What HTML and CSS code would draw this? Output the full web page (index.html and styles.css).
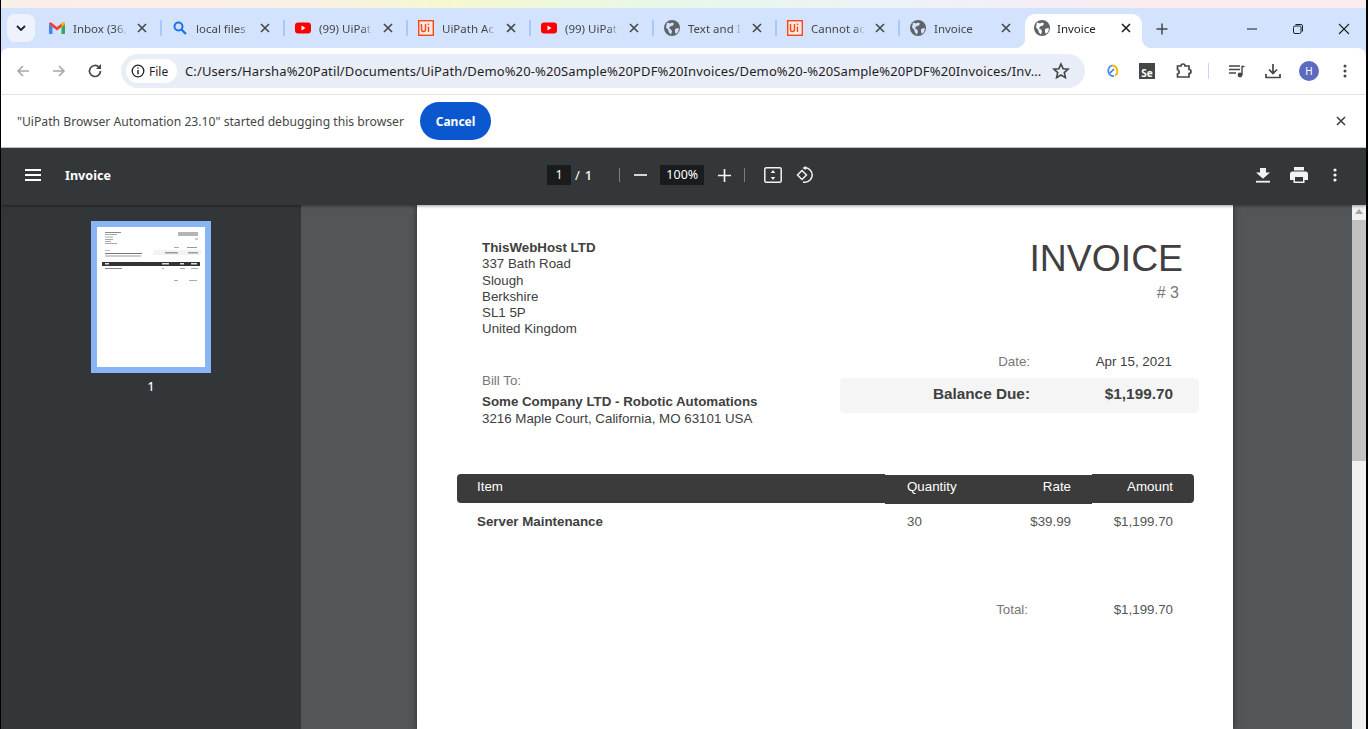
FILE: index.html
```html
<!DOCTYPE html>
<html lang="en">
<head>
    <meta charset="UTF-8">
    <title>Invoice</title>
    <link rel="stylesheet" href="styles.css">
</head>
<body>
    <svg class="defs" width="0" height="0">
        <symbol id="ic-close" viewBox="0 0 12 12"><path d="M2 2l8 8M10 2l-8 8" fill="none" stroke="currentColor" stroke-width="1.6"/></symbol>
        <symbol id="ic-globe" viewBox="0 0 16 16"><circle cx="8" cy="8" r="8" fill="#5f6368"/><path d="M3 2.500l3 1 2-1 2 1-1 2-3 1-1 2 2 1 1 2-1 3-2-2-1-3-2-2zM11 9l3-1 1 1-1 3-2 2-1-2z" fill="#d3e3fd"/></symbol>
        <symbol id="ic-globe-w" viewBox="0 0 16 16"><circle cx="8" cy="8" r="8" fill="#5f6368"/><path d="M3 2.500l3 1 2-1 2 1-1 2-3 1-1 2 2 1 1 2-1 3-2-2-1-3-2-2zM11 9l3-1 1 1-1 3-2 2-1-2z" fill="#fff"/></symbol>
        <symbol id="ic-yt" viewBox="0 0 16 12"><rect width="16" height="11" y=".5" rx="3" fill="#f00"/><path d="M6.500 3.500v5l4-2.500z" fill="#fff"/></symbol>
        <symbol id="ic-ui" viewBox="0 0 16 16"><rect x=".7" y=".7" width="14.600" height="14.600" fill="#fbe9e3" stroke="#fa4616" stroke-width="1.400"/><path d="M3.500 4v5.500a2 2 0 004 0V4M10.500 6.500V12M10.500 3.500v1.500" fill="none" stroke="#fa4616" stroke-width="1.400"/></symbol>
        <symbol id="ic-gmail" viewBox="0 0 16 12"><path d="M0 2v9a1 1 0 001 1h2.500V5z" fill="#4285f4"/><path d="M16 2v9a1 1 0 01-1 1h-2.500V5z" fill="#34a853"/><path d="M0 2l3.500 3L8 8.500 12.500 5 16 2a1.500 1.500 0 00-2.500-1.200L8 5 2.500.8A1.500 1.500 0 000 2z" fill="#ea4335"/><path d="M12.500 5V1.800l1-1A1.500 1.500 0 0116 2z" fill="#fbbc04"/></symbol>
    </svg>

    <div class="aurora"></div>

    <div class="tabstrip">
        <button class="tab-search"><svg width="10" height="6" viewBox="0 0 10 6"><path d="M1 1l4 4 4-4" fill="none" stroke="#1f1f1f" stroke-width="1.800"/></svg></button>
        <div class="tab">
            <svg class="favicon gmail"><use href="#ic-gmail"/></svg>
            <span class="tab-title">Inbox (36,</span>
            <svg class="tab-x"><use href="#ic-close"/></svg>
        </div>
        <div class="tab">
            <svg class="favicon" viewBox="0 0 16 16"><circle cx="6.500" cy="6.500" r="4" fill="none" stroke="#1a73e8" stroke-width="2"/><path d="M9.500 9.500l4.500 4.500" stroke="#1a73e8" stroke-width="2.200"/></svg>
            <span class="tab-title">local files</span>
            <svg class="tab-x"><use href="#ic-close"/></svg>
        </div>
        <div class="tab">
            <svg class="favicon yt"><use href="#ic-yt"/></svg>
            <span class="tab-title">(99) UiPat</span>
            <svg class="tab-x"><use href="#ic-close"/></svg>
        </div>
        <div class="tab">
            <svg class="favicon"><use href="#ic-ui"/></svg>
            <span class="tab-title">UiPath Ac</span>
            <svg class="tab-x"><use href="#ic-close"/></svg>
        </div>
        <div class="tab">
            <svg class="favicon yt"><use href="#ic-yt"/></svg>
            <span class="tab-title">(99) UiPat</span>
            <svg class="tab-x"><use href="#ic-close"/></svg>
        </div>
        <div class="tab">
            <svg class="favicon"><use href="#ic-globe"/></svg>
            <span class="tab-title">Text and I</span>
            <svg class="tab-x"><use href="#ic-close"/></svg>
        </div>
        <div class="tab">
            <svg class="favicon"><use href="#ic-ui"/></svg>
            <span class="tab-title">Cannot ac</span>
            <svg class="tab-x"><use href="#ic-close"/></svg>
        </div>
        <div class="tab tab-last">
            <svg class="favicon"><use href="#ic-globe"/></svg>
            <span class="tab-title">Invoice</span>
            <svg class="tab-x"><use href="#ic-close"/></svg>
        </div>
        <div class="tab tab-active">
            <svg class="favicon"><use href="#ic-globe-w"/></svg>
            <span class="tab-title">Invoice</span>
            <svg class="tab-x"><use href="#ic-close"/></svg>
        </div>
        <svg class="new-tab" width="12" height="12" viewBox="0 0 12 12"><path d="M6 .5v11M.5 6h11" stroke="#444746" stroke-width="1.500"/></svg>
        <div class="window-btns">
            <svg width="12" height="12" viewBox="0 0 12 12"><path d="M1 6h10" stroke="#1f1f1f"/></svg>
            <svg width="12" height="12" viewBox="0 0 12 12"><rect x="1.500" y="3" width="7.500" height="7.500" rx="1.500" fill="none" stroke="#1f1f1f"/><path d="M3.500 1.500h5.500a1.500 1.500 0 011.500 1.500v5.500" fill="none" stroke="#1f1f1f"/></svg>
            <svg width="12" height="12" viewBox="0 0 12 12"><path d="M1 1l10 10M11 1L1 11" stroke="#1f1f1f" stroke-width="1.100"/></svg>
        </div>
    </div>

    <div class="toolbar">
        <svg class="nav-ic" viewBox="0 0 16 16"><path d="M14 8H3M8 3L3 8l5 5" fill="none" stroke="#a5a7aa" stroke-width="1.600"/></svg>
        <svg class="nav-ic" viewBox="0 0 16 16"><path d="M2 8h11M8 3l5 5-5 5" fill="none" stroke="#a5a7aa" stroke-width="1.600"/></svg>
        <svg class="nav-ic" viewBox="0 0 16 16"><path d="M13.500 8A5.500 5.500 0 1112 4.200" fill="none" stroke="#444746" stroke-width="1.700"/><path d="M14 1v5H9z" fill="#444746"/></svg>
        <div class="omnibox">
            <div class="chip">
                <svg width="14" height="14" viewBox="0 0 14 14"><circle cx="7" cy="7" r="5.800" fill="none" stroke="#1f1f1f" stroke-width="1.300"/><path d="M7 6v4.200M7 3.500v1.300" stroke="#1f1f1f" stroke-width="1.400"/></svg>
                <span>File</span>
            </div>
            <span class="url">C:/Users/Harsha%20Patil/Documents/UiPath/Demo%20-%20Sample%20PDF%20Invoices/Demo%20-%20Sample%20PDF%20Invoices/Inv...</span>
            <svg class="star" width="18" height="18" viewBox="0 0 18 18"><path d="M9 2l2.100 4.700 5 .5-3.800 3.400 1.100 5L9 13l-4.400 2.600 1.100-5L1.900 7.200l5-.5z" fill="none" stroke="#444746" stroke-width="1.600"/></svg>
        </div>
        <div class="ext-icons">
            <svg width="16" height="16" viewBox="0 0 16 16"><path d="M8 2.500a5.500 5.500 0 013 10" fill="none" stroke="#f4b400" stroke-width="1.800"/><path d="M10 13.200A5.500 5.500 0 018 2.500" fill="none" stroke="#4285f4" stroke-width="1.800"/><path d="M6 10l4-4" stroke="#1a73e8" stroke-width="1.500"/></svg>
            <span class="se-box">Se</span>
            <svg width="18" height="18" viewBox="0 0 18 18"><path d="M2.500 4h3.500a2 2 0 014 0h4v3.500a2 2 0 010 4V15H2.500v-3a2 2 0 001-3.500 2 2 0 00-1-1z" fill="none" stroke="#444746" stroke-width="1.700"/></svg>
            <i class="ext-sep"></i>
            <svg width="16" height="14" viewBox="0 0 16 14"><path d="M0 2h11M0 5.500h11M0 9h7" stroke="#444746" stroke-width="1.400"/><circle cx="11" cy="11" r="2.400" fill="#444746"/><path d="M13 11V2.500h2.500" fill="none" stroke="#444746" stroke-width="1.400"/></svg>
            <svg width="16" height="16" viewBox="0 0 16 16"><path d="M8 1v9M4 6.500L8 10.500l4-4" fill="none" stroke="#444746" stroke-width="1.700"/><path d="M1 11v3.500h14V11" fill="none" stroke="#444746" stroke-width="1.700"/></svg>
            <span class="avatar">H</span>
            <svg width="4" height="14" viewBox="0 0 4 14"><circle cx="2" cy="2" r="1.500" fill="#444746"/><circle cx="2" cy="7" r="1.500" fill="#444746"/><circle cx="2" cy="12" r="1.500" fill="#444746"/></svg>
        </div>
    </div>

    <div class="infobar">
        <span class="info-text">"UiPath Browser Automation 23.10" started debugging this browser</span>
        <button class="cancel-btn">Cancel</button>
        <svg class="info-x" width="12" height="12"><use href="#ic-close"/></svg>
    </div>

    <div class="pdf-toolbar">
        <div class="pdf-left">
            <svg width="16" height="12" viewBox="0 0 16 12"><path d="M0 1h16M0 6h16M0 11h16" stroke="#fff" stroke-width="2"/></svg>
            <span class="pdf-name">Invoice</span>
        </div>
        <div class="pdf-center">
            <span class="pdf-field page-field">1</span>
            <span class="page-sep">/</span>
            <span class="page-total">1</span>
            <i class="pdf-sep first"></i>
            <svg class="minus" width="13" height="2" viewBox="0 0 13 2"><path d="M0 1h13" stroke="#f1f3f4" stroke-width="1.700"/></svg>
            <span class="pdf-field zoom-field">100%</span>
            <svg class="plus" width="13" height="13" viewBox="0 0 13 13"><path d="M0 6.500h13M6.500 0v13" stroke="#f1f3f4" stroke-width="1.700"/></svg>
            <i class="pdf-sep second"></i>
            <svg class="fit" width="18" height="16" viewBox="0 0 18 16"><rect x=".8" y=".8" width="16.400" height="14.400" rx="1.500" fill="none" stroke="#f1f3f4" stroke-width="1.500"/><path d="M9 3l2.300 3H6.700zM9 13l2.300-3H6.700z" fill="#f1f3f4"/></svg>
            <svg class="rotate" width="18" height="18" viewBox="0 0 18 18"><path d="M6 4.500L1.500 9 6 13.500 10.500 9z" fill="none" stroke="#f1f3f4" stroke-width="1.500"/><path d="M8 1.800h1a7.200 7.200 0 010 14.400H7" fill="none" stroke="#f1f3f4" stroke-width="1.500"/><path d="M10 0v4L6.500 2z" fill="#f1f3f4"/></svg>
        </div>
        <div class="pdf-right">
            <svg width="14" height="15" viewBox="0 0 14 15"><path d="M4 0h6v5h4l-7 7-7-7h4z" transform="scale(1 .9)" fill="#f1f3f4"/><path d="M0 13.700h14" stroke="#f1f3f4" stroke-width="1.800"/></svg>
            <svg class="print-ic" width="18" height="16" viewBox="0 0 18 16"><path d="M4 0h10v3.500H4zM2.500 4.500h13A2.500 2.500 0 0118 7v6h-3.500v3h-11v-3H0V7a2.500 2.500 0 012.500-2.500z" fill="#f1f3f4"/><rect x="5" y="10" width="8" height="4.500" fill="#33373a"/></svg>
            <svg width="4" height="14" viewBox="0 0 4 14"><circle cx="2" cy="2" r="1.600" fill="#f1f3f4"/><circle cx="2" cy="7" r="1.600" fill="#f1f3f4"/><circle cx="2" cy="12" r="1.600" fill="#f1f3f4"/></svg>
        </div>
    </div>

    <div class="pdf-body">
        <aside class="sidebar">
            <div class="thumb">
                <svg width="108" height="140" viewBox="0 0 108 140">
                    <rect x="8" y="5" width="16" height="1" fill="#888"/>
                    <rect x="8" y="7" width="12" height="1" fill="#aaa"/>
                    <rect x="8" y="9.500" width="8" height="1" fill="#aaa"/>
                    <rect x="8" y="12" width="8" height="1" fill="#aaa"/>
                    <rect x="8" y="14" width="6" height="1" fill="#aaa"/>
                    <rect x="8" y="16" width="12" height="1" fill="#aaa"/>
                    <rect x="81" y="5" width="20" height="4" fill="#b5b5b5"/>
                    <rect x="98" y="11" width="3" height="2" fill="#ccc"/>
                    <rect x="77" y="20" width="5" height="1" fill="#aaa"/>
                    <rect x="90" y="20" width="10" height="1" fill="#999"/>
                    <rect x="56" y="23" width="48" height="5" fill="#f3f3f3"/>
                    <rect x="68" y="25" width="13" height="1.500" fill="#999"/>
                    <rect x="91" y="25" width="10" height="1.500" fill="#999"/>
                    <rect x="8" y="23" width="5" height="1" fill="#bbb"/>
                    <rect x="8" y="26" width="37" height="1" fill="#777"/>
                    <rect x="8" y="28.500" width="36" height="1" fill="#999"/>
                    <rect x="5" y="35" width="98" height="4" fill="#333"/>
                    <rect x="8" y="36" width="4" height="1.500" fill="#ddd"/>
                    <rect x="65" y="36" width="7" height="1.500" fill="#ddd"/>
                    <rect x="83" y="36" width="4" height="1.500" fill="#ddd"/>
                    <rect x="94" y="36" width="6" height="1.500" fill="#ddd"/>
                    <rect x="8" y="41" width="17" height="1" fill="#888"/>
                    <rect x="65" y="41" width="2" height="1" fill="#aaa"/>
                    <rect x="83" y="41" width="5" height="1" fill="#aaa"/>
                    <rect x="94" y="41" width="7" height="1" fill="#aaa"/>
                    <rect x="77" y="53" width="4" height="1" fill="#aaa"/>
                    <rect x="92" y="53" width="8" height="1" fill="#aaa"/>
                </svg>
            </div>
            <span class="thumb-num">1</span>
        </aside>
        <main class="viewer">
            <div class="pdf-page">
                <div class="inv-top">
                    <div class="inv-from">
                        <div class="sender">
                            <strong>ThisWebHost LTD</strong>
                            <span>337 Bath Road</span>
                            <span>Slough</span>
                            <span>Berkshire</span>
                            <span>SL1 5P</span>
                            <span>United Kingdom</span>
                        </div>
                        <div class="bill-to">
                            <span class="muted">Bill To:</span>
                            <strong>Some Company LTD - Robotic Automations</strong>
                            <span>3216 Maple Court, California, MO 63101 USA</span>
                        </div>
                    </div>
                    <div class="inv-head">
                        <h1>INVOICE</h1>
                        <div class="inv-num"># 3</div>
                        <div class="inv-date">
                            <span class="lbl muted">Date:</span>
                            <span class="val">Apr 15, 2021</span>
                        </div>
                        <div class="balance">
                            <span class="lbl">Balance Due:</span>
                            <span class="val">$1,199.70</span>
                        </div>
                    </div>
                </div>
                <div class="table-head">
                    <div class="th th-item">Item</div>
                    <div class="th th-mid"><span>Quantity</span><span>Rate</span></div>
                    <div class="th th-amount">Amount</div>
                </div>
                <div class="table-row">
                    <strong class="col-item">Server Maintenance</strong>
                    <span class="col-qty">30</span>
                    <span class="col-rate">$39.99</span>
                    <span class="col-amount">$1,199.70</span>
                </div>
                <div class="total-row">
                    <span class="muted">Total:</span>
                    <span class="col-amount">$1,199.70</span>
                </div>
            </div>
            <div class="scrollbar">
                <svg width="8" height="5" viewBox="0 0 8 5"><path d="M4 0l4 5H0z" fill="#a3a3a3"/></svg>
                <div class="scroll-thumb"></div>
            </div>
        </main>
    </div>
</body>
</html>
```

FILE: styles.css
```css
* {
    box-sizing: border-box;
}
html, body {
    height: 100%;
}
body {
    margin: 0;
    width: 1368px;
    height: 729px;
    overflow: hidden;
    display: flex;
    flex-direction: column;
    font-family: "Noto Sans", sans-serif;
    background-color: #d3e3fd;
    border-left: 1px solid #000;
    border-right: 2px solid #000;
}
.defs {
    position: absolute;
}
.aurora {
    height: 8px;
    margin-left: -1px;
    flex: none;
    background: linear-gradient(90deg, #f9efe9 0, #f9f0e6 300px, #f5f8cf 450px, #e6f8ea 680px, #eef2f8 920px, #f9ecef 1150px, #f9ecef 100%);
}

/* tabs */
.tabstrip {
    height: 40px;
    flex: none;
    display: flex;
    align-items: flex-start;
    background-color: #d3e3fd;
    padding: 6px 0 0 6px;
}
.tab-search {
    width: 28px;
    height: 28px;
    margin-right: 3px;
    border: none;
    border-radius: 8px;
    background-color: #edf2fc;
    display: flex;
    align-items: center;
    justify-content: center;
    padding: 0;
}
.tab {
    width: 123px;
    height: 34px;
    flex: none;
    display: flex;
    align-items: center;
    padding: 0 13px 0 11px;
    position: relative;
    font-size: 11.500px;
    color: #444746;
}
.tab::after {
    content: "";
    position: absolute;
    right: -1px;
    top: 6px;
    height: 16px;
    border-right: 2px solid #a8c7fa;
}
.tab-last {
    width: 126px;
}
.tab-last::after {
    display: none;
}
.favicon {
    width: 16px;
    height: 16px;
    flex: none;
    margin-top: -6px;
}
.favicon.gmail,
.favicon.yt {
    height: 12px;
}
.tab-title {
    width: 54px;
    margin: -6px 0 0 8px;
    white-space: nowrap;
    -webkit-mask-image: linear-gradient(90deg, #000 80%, transparent);
    mask-image: linear-gradient(90deg, #000 80%, transparent);
}
.tab-x {
    width: 12px;
    height: 12px;
    margin: -6px 0 0 auto;
    color: #444746;
}
.tab-active {
    width: 117px;
    background-color: #fff;
    border-radius: 10px 10px 0 0;
    color: #1f1f1f;
    padding: 0 10px 0 9px;
}
.tab-active .tab-x {
    color: #1f1f1f;
}
.tab-active .tab-title {
    margin-left: 7px;
}
/* the flared feet of the selected tab */
.tab-active::before,
.tab-active::after {
    content: "";
    position: absolute;
    top: auto;
    bottom: 0;
    height: 10px;
    width: 10px;
    border: none;
}
.tab-active::before {
    left: -10px;
    background: radial-gradient(circle at 0 0, transparent 10px, #fff 10.500px);
}
.tab-active::after {
    right: -10px;
    background: radial-gradient(circle at 100% 0, transparent 10px, #fff 10.500px);
}
.new-tab {
    margin: 9px 0 0 14px;
}
.window-btns {
    margin-left: auto;
    width: 120px;
    display: flex;
    gap: 34px;
    padding: 9px 16px 0 0;
}

/* address bar */
.toolbar {
    height: 47px;
    flex: none;
    display: flex;
    align-items: center;
    background-color: #fff;
    border-bottom: 1px solid #dfe1e5;
    border-radius: 8px 8px 0 0;
    padding-left: 14px;
    position: relative;
}
.nav-ic {
    width: 16px;
    height: 16px;
    margin-right: 20px;
}
.nav-ic:nth-of-type(3) {
    margin-right: 18px;
}
.omnibox {
    width: 964px;
    height: 34px;
    flex: none;
    display: flex;
    align-items: center;
    background-color: #e9edf7;
    border-radius: 17px;
    padding: 0 15px 0 5px;
    font-size: 13px;
    color: #1f1f1f;
}
.chip {
    width: 51px;
    height: 24px;
    flex: none;
    display: flex;
    align-items: center;
    gap: 4px;
    padding-left: 5px;
    border-radius: 12px;
    background-color: #fff;
    font-size: 12px;
}
.url {
    margin-left: 8px;
    white-space: nowrap;
    letter-spacing: 0.12px;
    flex: 1;
}
.star {
    flex: none;
}
.ext-icons {
    flex: 1;
    display: flex;
    align-items: center;
    padding-left: 19px;
}
.ext-icons svg:nth-child(1) {
    margin-right: 19px;
}
.se-box {
    width: 16px;
    height: 16px;
    background-color: #444746;
    color: #fff;
    font-size: 10px;
    font-weight: 700;
    line-height: 20px;
    text-align: center;
    margin-right: 20px;
}
.ext-icons svg:nth-child(3) {
    margin-right: 15px;
}
.ext-sep {
    height: 16px;
    border-right: 1px solid #c6d6f2;
    margin-right: 20px;
}
.ext-icons svg:nth-child(5) {
    margin-right: 20px;
}
.ext-icons svg:nth-child(6) {
    margin-right: 18px;
}
.avatar {
    width: 20px;
    height: 20px;
    border-radius: 50%;
    background-color: #5c6bc0;
    color: #fff;
    font-size: 10px;
    line-height: 20px;
    text-align: center;
    margin-right: 24px;
}

/* debugging bar */
.infobar {
    height: 53px;
    flex: none;
    display: flex;
    align-items: center;
    background-color: #fff;
    padding: 0 19px 0 16px;
    border-bottom: 1px solid #cfcfcf;
    font-size: 12.180px;
    color: #444746;
}
.cancel-btn {
    width: 71px;
    height: 38px;
    margin: 0 0 0 16px;
    border: none;
    border-radius: 19px;
    background-color: #0b57d0;
    color: #fff;
    font-family: "Noto Sans", sans-serif;
    font-size: 12px;
    font-weight: 700;
    padding: 0;
}
.info-x {
    margin-left: auto;
    color: #3c4043;
}

/* pdf viewer */
.pdf-toolbar {
    height: 57px;
    flex: none;
    display: flex;
    align-items: center;
    padding-bottom: 3px;
    background-color: #33373a;
    color: #fff;
    font-size: 13px;
    box-shadow: 0 1px 3px rgba(0, 0, 0, 0.4);
    position: relative;
    z-index: 2;
}
.pdf-left {
    width: 546px;
    flex: none;
    display: flex;
    align-items: center;
    padding-left: 24px;
}
.pdf-name {
    margin-left: 24px;
    font-size: 12.600px;
    font-weight: 700;
    color: #fff;
}
.pdf-center {
    display: flex;
    align-items: center;
}
.pdf-field {
    height: 20px;
    background-color: #191b1c;
    line-height: 20px;
    text-align: center;
    color: #fff;
    font-size: 12.500px;
}
.page-field {
    width: 24px;
}
.page-sep {
    margin-left: 4px;
}
.page-total {
    margin-left: 5px;
    font-weight: 500;
}
.pdf-sep {
    height: 14px;
    border-right: 1px solid #7a7d80;
}
.pdf-sep.first {
    margin-left: 27px;
}
.minus {
    margin-left: 14px;
}
.zoom-field {
    width: 44px;
    margin-left: 13px;
}
.plus {
    margin-left: 14px;
}
.pdf-sep.second {
    margin-left: 13px;
}
.fit {
    margin-left: 19px;
}
.rotate {
    margin-left: 14px;
}
.pdf-right {
    margin-left: auto;
    display: flex;
    align-items: center;
    gap: 20px;
    padding-right: 29px;
}
.print-ic {
    margin-right: 5px;
}
.pdf-body {
    flex: 1;
    display: flex;
    min-height: 0;
}
.sidebar {
    width: 300px;
    flex: none;
    background-color: #323639;
    display: flex;
    flex-direction: column;
    align-items: center;
    padding-top: 16px;
    padding-right: 1px;
}
.thumb {
    width: 120px;
    height: 152px;
    border: 6px solid #8ab4f8;
    background-color: #fff;
    margin-left: 1px;
}
.thumb svg {
    display: block;
}
.thumb-num {
    margin-top: 5px;
    font-size: 12px;
    font-weight: 500;
    color: #fff;
    margin-left: 1px;
}
.viewer {
    flex: 1;
    display: flex;
    justify-content: flex-start;
    background-color: #525659;
    min-width: 0;
    padding-left: 116px;
}
.pdf-page {
    width: 816px;
    height: 524px;
    flex: none;
    background-color: #fff;
    box-shadow: 0 0 6px rgba(0, 0, 0, 0.5);
    padding: 35px 39px 0 40px;
    font-family: "Liberation Sans", Arial, sans-serif;
    font-size: 13.330px;
    line-height: 16.300px;
    color: #404040;
    overflow: hidden;
}
.inv-top {
    display: flex;
    justify-content: space-between;
    height: 234px;
}
.inv-from {
    padding-left: 25px;
}
.sender,
.bill-to {
    display: flex;
    flex-direction: column;
}
.bill-to {
    margin-top: 35px;
}
.bill-to strong {
    margin: 5px 0 1px;
}
.muted {
    color: #777;
}
.inv-head {
    width: 359px;
    margin-right: -5px;
    text-align: right;
}
.inv-head h1 {
    margin: -1px 0 0;
    padding-right: 16px;
    font-size: 37.330px;
    line-height: 38px;
    font-weight: 400;
}
.inv-num {
    padding-right: 20px;
    margin-top: 7px;
    font-size: 16px;
    line-height: 18px;
    color: #777;
}
.inv-date,
.balance {
    display: flex;
}
.inv-date {
    margin-top: 52px;
}
.inv-date .lbl,
.balance .lbl {
    width: 190px;
}
.inv-date .val {
    width: 142px;
}
.balance {
    height: 35px;
    margin-top: 8px;
    padding-bottom: 3px;
    align-items: center;
    border-radius: 4px;
    background-color: #f5f5f5;
    font-size: 15.330px;
    font-weight: 700;
}
.balance .val {
    width: 143px;
}
.table-head {
    display: flex;
    height: 30px;
    color: #fff;
    line-height: 26px;
}
.th {
    background-color: #3b3b3b;
    height: 29px;
}
.th-item {
    width: 428px;
    padding-left: 20px;
    border-radius: 4px 0 0 4px;
}
.th-mid {
    width: 207px;
    margin-top: 1px;
    display: flex;
    justify-content: space-between;
    padding: 0 21px 0 22px;
    line-height: 24px;
}
.th-amount {
    width: 102px;
    padding-right: 21px;
    text-align: right;
    border-radius: 0 4px 4px 0;
}
.table-row {
    display: flex;
    padding-top: 10px;
}
.col-item {
    width: 428px;
    padding-left: 20px;
}
.col-qty {
    width: 100px;
    padding-left: 22px;
    color: #555;
}
.col-rate {
    width: 86px;
    text-align: right;
    color: #555;
}
.col-amount {
    width: 123px;
    padding-right: 21px;
    text-align: right;
    color: #555;
}
.total-row {
    display: flex;
    justify-content: flex-end;
    padding-top: 72px;
}
.total-row .muted {
    margin-right: 43px;
}
.scrollbar {
    width: 14px;
    flex: none;
    margin-left: 119px;
    display: flex;
    flex-direction: column;
    align-items: center;
    background-color: #f1f1f1;
    padding-top: 4px;
}
.scroll-thumb {
    width: 14px;
    height: 241px;
    margin-top: 6px;
    background-color: #c1c1c1;
}
```
